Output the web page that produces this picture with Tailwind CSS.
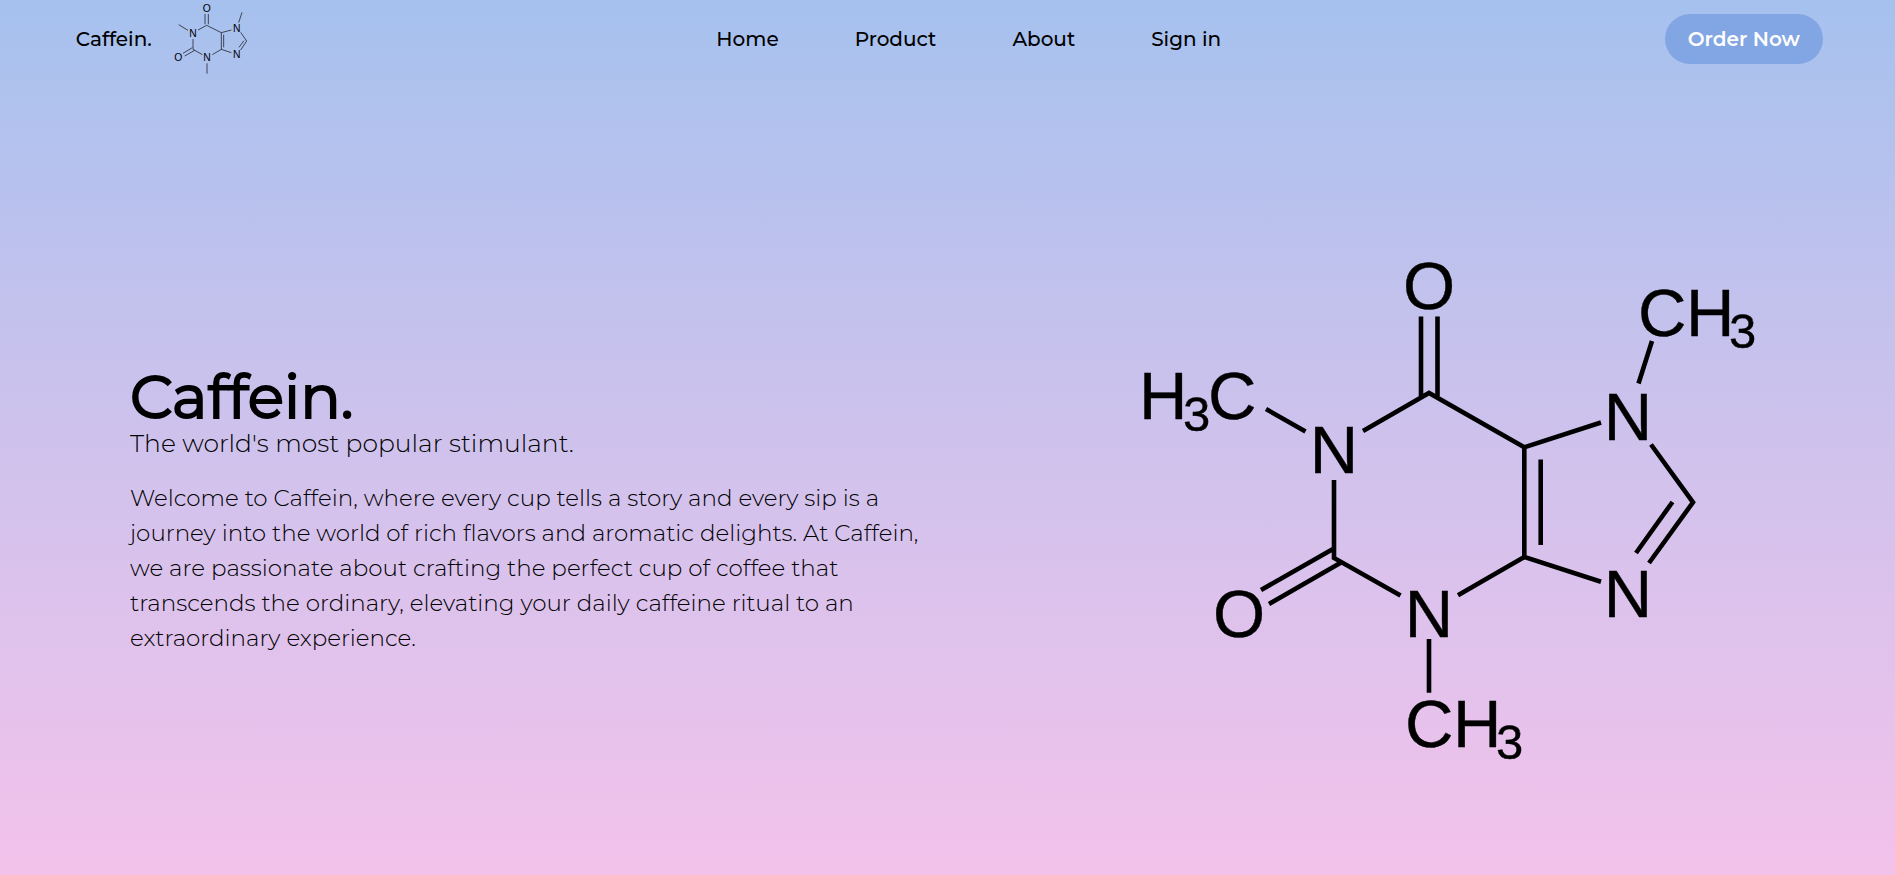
<!DOCTYPE html>
<html lang="en">
<head>
<meta charset="utf-8">
<meta name="viewport" content="width=device-width, initial-scale=1">
<title>Caffein.</title>
<script src="https://cdn.jsdelivr.net/npm/@tailwindcss/browser@4"></script>
</head>
<body class="flex min-h-screen flex-col bg-linear-to-b from-[#a6c1ee] to-[#f3c2eb] font-['Montserrat','Inter',sans-serif] text-black">
<header class="flex items-center justify-between pl-[4%] pr-[72px]">
  <a href="#" class="flex h-[78px] items-center gap-[21px] text-[20px] leading-none font-medium">
    Caffein.
    <svg class="mt-0.5 mr-5 h-20 w-20" viewBox="340 0 240 240" fill="none" stroke="#000" stroke-opacity=".75" stroke-width="2.6" aria-hidden="true">
      <path d="M357 74 385 91M436 42V73M446 42V73M415 90 441 76 485 98 515 90M485 98V148L515 158M492 104V142M485 148 458 164M400 117V148L428 164M398 143 370 160M405 151 375 168M442 190V221M547 37 537 68M543 97 561 123 543 150M553 122 538 142"/>
      <g fill="#000" stroke="none" font-family="Liberation Sans, Arial, sans-serif" font-weight="400" font-size="31" text-anchor="middle">
        <text x="441" y="36">O</text><text x="400" y="110">N</text><text x="442" y="184">N</text><text x="356" y="184">O</text><text x="531" y="95">N</text><text x="531" y="173">N</text>
      </g>
    </svg>
  </a>
  <nav class="flex items-center gap-[76px] text-[20px] leading-none font-medium">
    <a href="#">Home</a>
    <a href="#">Product</a>
    <a href="#">About</a>
    <a href="#">Sign in</a>
  </nav>
  <button type="button" class="h-[50px] rounded-full bg-[#82a5e3] px-[23px] text-[20px] leading-none font-semibold text-white">Order Now</button>
</header>
<main class="flex flex-1 items-center justify-between px-[130px] pt-[66px]">
  <section class="w-[790px] pt-1">
    <h1 class="text-[60px] leading-[60px] font-normal [-webkit-text-stroke:2px_black]">Caffein.</h1>
    <p class="text-[25px] leading-8 font-light">The world's most popular stimulant.</p>
    <p class="mt-[22px] text-[23px] leading-[35px] font-light">Welcome to Caffein, where every cup tells a story and every sip is a<br>journey into the world of rich flavors and aromatic delights. At Caffein,<br>we are passionate about crafting the perfect cup of coffee that<br>transcends the ordinary, elevating your daily caffeine ritual to an<br>extraordinary experience.</p>
  </section>
  <svg class="w-[630px] shrink-0" viewBox="1135 240 630 540" fill="none" stroke="#000" stroke-width="4.6" role="img" aria-label="Caffeine molecule">
    <path d="M1266 409 1305.500 431.500M1421 316.500V396M1437.500 316.500V396M1363 431 1429 393 1524.300 447.300 1601 422.500M1524.300 447.300V557L1601 581.700M1540.700 459.500V545M1524.300 557 1458 595.300M1334 480V558L1400.500 595.500M1333 549 1261 590M1342 562 1269 604M1429 639V692.700M1652 341 1638.500 383.500M1651 444.500 1693 502.300 1649 563M1672.500 502 1636 553"/>
    <g fill="#000" stroke="#000" stroke-width=".4" font-family="Liberation Sans, Arial, sans-serif" font-size="67">
      <text x="1139" y="419">H<tspan x="1183" y="431" font-size="49">3</tspan><tspan x="1208" y="419">C</tspan></text>
      <text x="1638" y="336">C<tspan x="1686">H</tspan><tspan x="1729" y="348" font-size="49">3</tspan></text>
      <text x="1405" y="747">C<tspan x="1453">H</tspan><tspan x="1496" y="759" font-size="49">3</tspan></text>
      <g text-anchor="middle">
        <text x="1429" y="309">O</text><text x="1239" y="637">O</text>
        <text x="1334" y="473">N</text><text x="1429" y="637">N</text><text x="1628" y="440">N</text><text x="1628" y="617">N</text>
      </g>
    </g>
  </svg>
</main>
</body>
</html>
